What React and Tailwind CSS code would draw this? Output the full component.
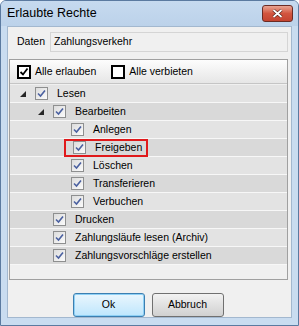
import React from "react";

const font = { fontFamily: '"Liberation Sans", Arial, sans-serif' };

function TreeCheck() {
  return (
    <div className="w-[13px] h-[13px] border border-[#8e8f8f] bg-gradient-to-br from-[#dcdcdc] to-[#fbfbfb] flex items-center justify-center shrink-0">
      <svg width="9" height="9" viewBox="0 0 9 9">
        <path d="M1 4.5 L3.5 7 L8 1.5" fill="none" stroke="#4b61a0" strokeWidth="1.6" />
      </svg>
    </div>
  );
}

function Expander() {
  return (
    <svg width="6" height="6" viewBox="0 0 6 6" className="shrink-0">
      <path d="M6 0 L6 6 L0 6 Z" fill="#262626" />
    </svg>
  );
}

const rows = [
  { label: "Lesen", level: 0, exp: true },
  { label: "Bearbeiten", level: 1, exp: true },
  { label: "Anlegen", level: 2 },
  { label: "Freigeben", level: 2, mark: true },
  { label: "Löschen", level: 2 },
  { label: "Transferieren", level: 2 },
  { label: "Verbuchen", level: 2 },
  { label: "Drucken", level: 1 },
  { label: "Zahlungsläufe lesen (Archiv)", level: 1 },
  { label: "Zahlungsvorschläge erstellen", level: 1 },
];

export default function App() {
  return (
    <div className="w-[299px] h-[326px] bg-[#c9dcf0] border border-[#5b7aa0] rounded-t-[6px] flex flex-col overflow-hidden text-[10.5px] text-black" style={font}>
      <div className="h-[25px] flex items-center justify-between pl-[6px] pr-[5px] bg-gradient-to-b from-[#c6daef] to-[#bcd2ea]">
        <span className="text-[12.5px]">Erlaubte Rechte</span>
        <div className="w-[31px] h-[17px] rounded-[3px] border border-[#6b2b24] bg-gradient-to-b from-[#e8a493] via-[#d2553f] to-[#c44431] flex items-center justify-center">
          <svg width="11" height="9" viewBox="0 0 11 9">
            <path d="M1.5 1 L9.5 8 M9.5 1 L1.5 8" stroke="#4a1a12" strokeWidth="3" />
            <path d="M1.5 1 L9.5 8 M9.5 1 L1.5 8" stroke="#fff" strokeWidth="1.8" />
          </svg>
        </div>
      </div>
      <div className="flex-1 mx-[6px] mb-[7px] bg-[#f0f0f0] border border-[#a3b8cf] flex flex-col">
        <div className="flex items-center mt-[5px] ml-[9px]">
          <span className="w-[33px]">Daten</span>
          <div className="w-[238px] h-[20px] border border-[#d5d5d5] bg-[#f0f0f0] flex items-center pl-[3px]">
            Zahlungsverkehr
          </div>
        </div>
        <div className="mt-[7px] ml-[1px] w-[279px] h-[221px] border border-[#a0a0a0] flex flex-col bg-[#f0f0f0]">
          <div className="h-[24px] bg-gradient-to-b from-[#fdfdfd] to-[#e6e6e6] border-b border-[#c5c5c5] flex items-center pl-[7px]">
            <div className="w-[14px] h-[14px] border-2 border-black bg-white flex items-center justify-center">
              <svg width="10" height="10" viewBox="0 0 10 10">
                <path d="M1.5 5 L4 7.5 L8.5 1.5" fill="none" stroke="#000" strokeWidth="1.8" />
              </svg>
            </div>
            <span className="ml-[4px]">Alle erlauben</span>
            <div className="ml-[15px] w-[14px] h-[14px] border-2 border-black bg-white" />
            <span className="ml-[4px]">Alle verbieten</span>
          </div>
          <div className="flex flex-col pt-[1px]">
            {rows.map((r, i) => (
              <div
                key={i}
                className={`h-[18px] flex items-center border-b border-[#f7f7f7] ${i % 2 === 0 ? "bg-[#e3e3e3]" : "bg-[#d9d9d9]"}`}
              >
                <div className={`flex items-center ${r.level === 0 ? "pl-[10px]" : r.level === 1 ? "pl-[28px]" : "pl-[46px]"}`}>
                  <div className="w-[6px] flex">{r.exp ? <Expander /> : null}</div>
                  <div className={`ml-[2px] pl-[7px] pr-[4px] h-[18px] flex items-center ${r.mark ? "border-2 border-[#e0191b] pl-[5px] pr-[1px]" : ""}`}>
                    <TreeCheck />
                    <span className="ml-[9px]">{r.label}</span>
                  </div>
                </div>
              </div>
            ))}
          </div>
        </div>
        <div className="flex justify-center gap-[7px] mt-[13px] pr-[3px]">
          <button className="w-[72px] h-[24px] rounded-[3px] border border-[#3c7fb1] bg-gradient-to-b from-[#eaf6fd] to-[#bee6fd] shadow-[inset_0_0_0_1px_#8fd0f5]">
            Ok
          </button>
          <button className="w-[72px] h-[24px] rounded-[3px] border border-[#707070] bg-gradient-to-b from-[#f2f2f2] to-[#d0d0d0]">
            Abbruch
          </button>
        </div>
      </div>
    </div>
  );
}
